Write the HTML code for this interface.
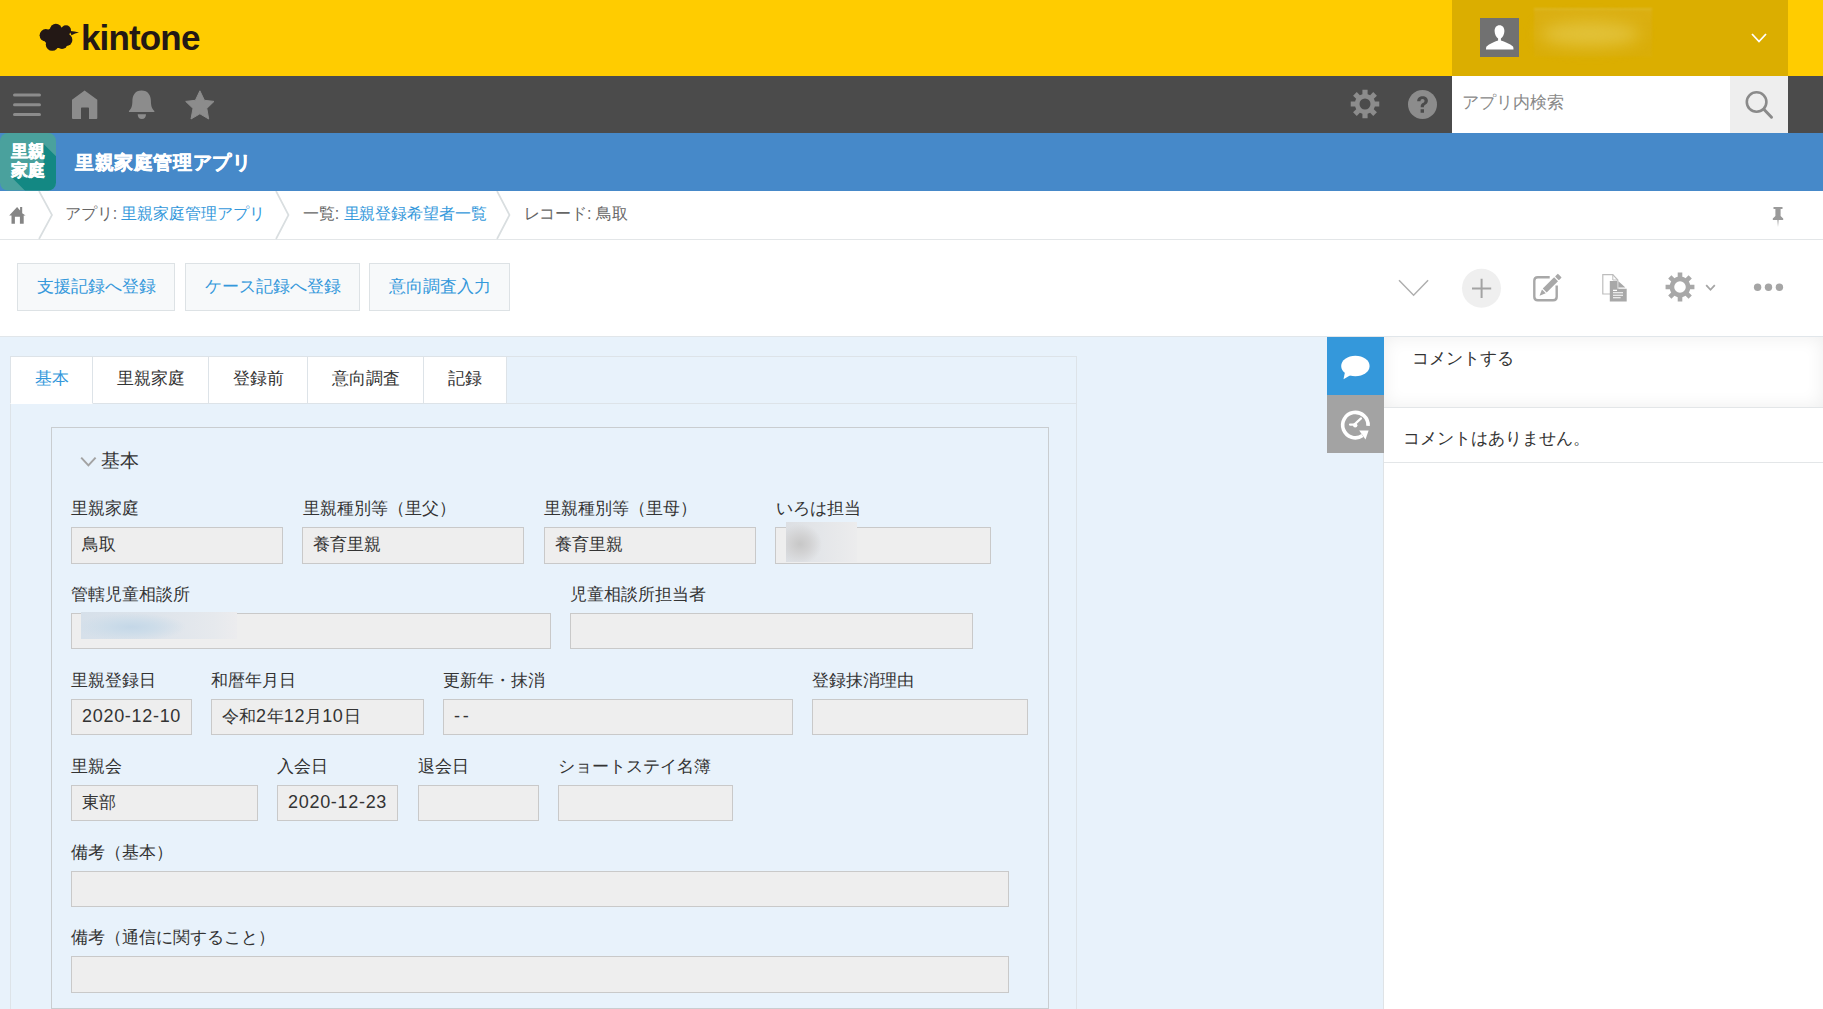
<!DOCTYPE html>
<html><head><meta charset="utf-8">
<style>
*{box-sizing:border-box;margin:0;padding:0}
html,body{width:1823px;height:1009px;overflow:hidden;background:#fff;font-family:"Liberation Sans",sans-serif;color:#333}
.a{position:absolute}
.t{position:absolute;white-space:nowrap;line-height:1}
#hdr{left:0;top:0;width:1823px;height:76px;background:#FFCC00}
#user{left:1452px;top:0;width:336px;height:76px;background:#DBAE00}
#nav{left:0;top:76px;width:1823px;height:57px;background:#4B4B4B}
#search{left:1452px;top:76px;width:278px;height:57px;background:#fff}
#sbtn{left:1730px;top:76px;width:58px;height:57px;background:#EEEEEE}
#appbar{left:0;top:133px;width:1823px;height:58px;background:#4689C9}
#crumb{left:0;top:191px;width:1823px;height:49px;background:#fff;border-bottom:1px solid #E3E6E8}
#content{left:0;top:336px;width:1384px;height:673px;background:#E8F2FB;border-top:1px solid #E1E6EA}
#side{left:1384px;top:336px;width:439px;height:673px;background:#fff;border-top:1px solid #E1E6EA}
.btn{position:absolute;top:263px;height:48px;background:#F7F9FA;border:1px solid #DDE2E5;color:#3498DB;font-size:16.8px;line-height:46px;text-align:center}
.lbl{position:absolute;font-size:16.8px;line-height:1;white-space:nowrap;color:#333}
.fld{position:absolute;height:37px;background:#EEEEEE;border:1px solid #C9C9C9;font-size:16.8px;line-height:33px;padding-left:10px;color:#333;white-space:nowrap}
.n{font-size:18px;letter-spacing:0.7px}
.tab{position:absolute;top:356px;height:48px;border:1px solid #DDE3E8;border-left:none;background:#fff;font-size:16.8px;line-height:44px;text-align:center;color:#333}
</style></head><body>
<div id="hdr" class="a"></div>
<div id="user" class="a"></div>
<div id="nav" class="a"></div>
<div id="search" class="a"></div>
<div id="sbtn" class="a"></div>
<div id="appbar" class="a"></div>
<div id="crumb" class="a"></div>
<div id="content" class="a"></div>
<div id="side" class="a"></div>

<!-- toolbar buttons -->
<div class="btn" style="left:17px;width:158px">支援記録へ登録</div>
<div class="btn" style="left:185px;width:175px">ケース記録へ登録</div>
<div class="btn" style="left:369px;width:141px">意向調査入力</div>

<!-- tabs -->
<div class="a" style="left:10px;top:356px;width:1067px;height:653px;border:1px solid #DDE3E8;border-bottom:none"></div>
<div class="a" style="left:506px;top:403px;width:570px;height:1px;background:#DDE3E8"></div>
<div class="tab" style="left:10px;width:83px;border-left:1px solid #DDE3E8;border-bottom-color:#fff;color:#3498DB">基本</div>
<div class="tab" style="left:93px;width:116px">里親家庭</div>
<div class="tab" style="left:209px;width:99px">登録前</div>
<div class="tab" style="left:308px;width:116px">意向調査</div>
<div class="tab" style="left:424px;width:83px">記録</div>

<!-- section -->
<div class="a" style="left:51px;top:427px;width:998px;height:582px;border:1px solid #C9CDD0"></div>
<div class="lbl" style="left:101px;top:451.3px;font-size:19px">基本</div>
<svg class="a" style="left:78px;top:454px" width="20" height="16" viewBox="0 0 20 16"><path d="M3.2 3.6 L10.4 11.4 L17.6 3.6" fill="none" stroke="#A3A3A3" stroke-width="2"/></svg>

<!-- row1 -->
<div class="lbl" style="left:71px;top:501.3px">里親家庭</div>
<div class="fld" style="left:71px;top:527px;width:212px">鳥取</div>
<div class="lbl" style="left:303px;top:501.3px">里親種別等（里父）</div>
<div class="fld" style="left:302px;top:527px;width:222px">養育里親</div>
<div class="lbl" style="left:544px;top:501.3px">里親種別等（里母）</div>
<div class="fld" style="left:544px;top:527px;width:212px">養育里親</div>
<div class="lbl" style="left:776px;top:501.3px">いろは担当</div>
<div class="fld" style="left:775px;top:527px;width:216px"></div>
<!-- row2 -->
<div class="lbl" style="left:71px;top:587.1px">管轄児童相談所</div>
<div class="fld" style="left:71px;top:613px;width:480px;height:36px"></div>
<div class="lbl" style="left:570px;top:587.1px">児童相談所担当者</div>
<div class="fld" style="left:570px;top:613px;width:403px;height:36px"></div>
<!-- row3 -->
<div class="lbl" style="left:71px;top:672.9px">里親登録日</div>
<div class="fld" style="left:71px;top:699px;width:121px;height:36px"><span class="n">2020-12-10</span></div>
<div class="lbl" style="left:211px;top:672.9px">和暦年月日</div>
<div class="fld" style="left:211px;top:699px;width:213px;height:36px">令和<span class="n">2</span>年<span class="n">12</span>月<span class="n">10</span>日</div>
<div class="lbl" style="left:443px;top:672.9px">更新年・抹消</div>
<div class="fld" style="left:443px;top:699px;width:350px;height:36px"><span class="n" style="letter-spacing:2.8px">--</span></div>
<div class="lbl" style="left:812px;top:672.9px">登録抹消理由</div>
<div class="fld" style="left:812px;top:699px;width:216px;height:36px"></div>
<!-- row4 -->
<div class="lbl" style="left:71px;top:758.7px">里親会</div>
<div class="fld" style="left:71px;top:785px;width:187px;height:36px">東部</div>
<div class="lbl" style="left:277px;top:758.7px">入会日</div>
<div class="fld" style="left:277px;top:785px;width:121px;height:36px"><span class="n">2020-12-23</span></div>
<div class="lbl" style="left:418px;top:758.7px">退会日</div>
<div class="fld" style="left:418px;top:785px;width:121px;height:36px"></div>
<div class="lbl" style="left:558px;top:758.7px">ショートステイ名簿</div>
<div class="fld" style="left:558px;top:785px;width:175px;height:36px"></div>
<!-- row5 -->
<div class="lbl" style="left:71px;top:844.5px">備考（基本）</div>
<div class="fld" style="left:71px;top:871px;width:938px;height:36px"></div>
<div class="lbl" style="left:71px;top:930.3px">備考（通信に関すること）</div>
<div class="fld" style="left:71px;top:956px;width:938px"></div>

<!-- blurred -->
<div class="a" style="left:786px;top:522px;width:71px;height:40px;background:radial-gradient(ellipse 22px 20px at 14px 22px,#C7C7C7 0%,#D2D2D3 45%,rgba(226,228,231,0) 100%),linear-gradient(90deg,#DCDFE3 0%,#E4E6E9 50%,#ECECED 100%)"></div>
<div class="a" style="left:81px;top:612px;width:156px;height:27px;background:radial-gradient(ellipse 55px 14px at 50px 15px,#C4D7E7 0%,#CCDCE9 40%,rgba(220,227,236,0) 100%),linear-gradient(90deg,#D6E0EA 0%,#DEE4EB 50%,#E6E9ED 85%,#ECECEE 100%)"></div>
<!-- header texts -->
<div class="t" style="left:75px;top:152.5px;font-size:19px;font-weight:bold;color:#fff;-webkit-text-stroke:0.5px #fff;letter-spacing:0.6px">里親家庭管理アプリ</div>
<div class="t" style="left:65px;top:206px;font-size:16px;color:#666;letter-spacing:-0.1px">アプリ: <span style="color:#3498DB">里親家庭管理アプリ</span></div>
<div class="t" style="left:303px;top:206px;font-size:16px;color:#666;letter-spacing:-0.1px">一覧: <span style="color:#3498DB">里親登録希望者一覧</span></div>
<div class="t" style="left:523.5px;top:206px;font-size:16px;color:#666;letter-spacing:-0.1px">レコード: 鳥取</div>
<div class="t" style="left:1462px;top:95.1px;font-size:16.8px;color:#888">アプリ内検索</div>

<!-- side -->
<div class="a" style="left:1327px;top:337px;width:57px;height:58px;background:#3498DB"></div>
<div class="a" style="left:1327px;top:395px;width:57px;height:58px;background:#A3A3A3"></div>
<div class="a" style="left:1384px;top:337px;width:439px;height:71px;background:#fff;border-bottom:1px solid #E3E6E8;box-shadow:inset 0 0 18px rgba(0,0,0,0.07)"></div>
<div class="t" style="left:1412px;top:351px;font-size:16.8px;color:#333">コメントする</div>
<div class="t" style="left:1402.5px;top:431px;font-size:16.8px;color:#333">コメントはありません。</div>
<div class="a" style="left:1384px;top:462px;width:439px;height:1px;background:#E3E6E8"></div>
<div class="a" style="left:1383px;top:453px;width:1px;height:556px;background:#DFE3E6"></div>
<!-- kintone logo -->
<svg class="a" style="left:0;top:0" width="90" height="76" viewBox="0 0 90 76">
<g fill="#231815">
<circle cx="45.8" cy="35.3" r="6.2"/><circle cx="55.9" cy="29.8" r="6"/><circle cx="66" cy="30.2" r="5"/>
<circle cx="66.3" cy="39.9" r="6.1"/><circle cx="52.2" cy="44.4" r="6.4"/><circle cx="62" cy="43.3" r="5.7"/>
<ellipse cx="57" cy="37.5" rx="13" ry="10.5"/>
<path d="M69.5 31 Q74 30.8 79 32.5 Q75 33 71.5 35.2 Z"/>
</g></svg>
<div class="t" style="left:81px;top:19.8px;font-size:35px;font-weight:bold;color:#231815;letter-spacing:-0.85px">kintone</div>
<!-- nav icons -->
<svg class="a" style="left:0;top:76px" width="230" height="57" viewBox="0 76 230 57">
<g fill="#8C8C8C">
<rect x="13" y="93.5" width="28" height="3" rx="1.5"/><rect x="13" y="103.3" width="28" height="3" rx="1.5"/><rect x="13" y="113" width="28" height="3" rx="1.5"/>
<path d="M72 99.8 L84.6 90.6 L97.3 99.8 L97.3 118 Q97.3 119 96.3 119 L89 119 L89 108.3 Q89 107.5 88.2 107.5 L81.8 107.5 Q81 107.5 81 108.3 L81 119 L73 119 Q72 119 72 118 Z"/>
<path d="M141.5 90.6 C135 90.6 132.5 95.5 132.4 101 C132.3 106 131.5 108.5 129 111 L128.9 112 L154.4 112 L154.3 111 C151.8 108.5 151 106 150.9 101 C150.8 95.5 148.2 90.6 141.5 90.6 Z"/>
<path d="M137.7 114.3 L146 114.3 Q146 119 141.85 119 Q137.7 119 137.7 114.3 Z"/>
<path d="M199.9 90.8 L204.4 100.3 L214 101.4 L206.8 108.4 L208.7 119 L199.9 113.8 L191 119 L193 108.4 L185.7 101.4 L195.4 100.3 Z" stroke="#8C8C8C" stroke-width="1" stroke-linejoin="round"/>
</g></svg>
<svg class="a" style="left:1350px;top:89.4px" width="30" height="30" viewBox="0 0 30 30"><path fill="#8C8C8C" fill-rule="evenodd" d="M24.86 12.40 L29.26 12.40 L29.26 17.60 L24.86 17.60 A10.20 10.20 0 0 1 23.81 20.14 L26.93 23.25 L23.25 26.93 L20.14 23.81 A10.20 10.20 0 0 1 17.60 24.86 L17.60 29.26 L12.40 29.26 L12.40 24.86 A10.20 10.20 0 0 1 9.86 23.81 L6.75 26.93 L3.07 23.25 L6.19 20.14 A10.20 10.20 0 0 1 5.14 17.60 L0.74 17.60 L0.74 12.40 L5.14 12.40 A10.20 10.20 0 0 1 6.19 9.86 L3.07 6.75 L6.75 3.07 L9.86 6.19 A10.20 10.20 0 0 1 12.40 5.14 L12.40 0.74 L17.60 0.74 L17.60 5.14 A10.20 10.20 0 0 1 20.14 6.19 L23.25 3.07 L26.93 6.75 L23.81 9.86 A10.20 10.20 0 0 1 24.86 12.40 Z M20.50 15.00 A5.50 5.50 0 1 0 9.50 15.00 A5.50 5.50 0 1 0 20.50 15.00 Z"/></svg>
<svg class="a" style="left:1407.9px;top:89.9px" width="29" height="29" viewBox="0 0 29 29"><circle cx="14.5" cy="14.5" r="14.5" fill="#8C8C8C"/>
<path d="M9.2 11.3 C9.2 7.8 11.5 6.2 14.6 6.2 C17.8 6.2 19.9 8 19.9 10.8 C19.9 13.2 18.3 14.1 16.9 15 C16.1 15.5 15.9 16 15.9 16.8 L15.9 17.3 L12.7 17.3 L12.7 16.4 C12.7 14.9 13.3 14 14.7 13.1 C15.9 12.3 16.5 11.8 16.5 10.9 C16.5 9.8 15.7 9.1 14.5 9.1 C13.2 9.1 12.5 9.9 12.5 11.3 Z M12.6 19.3 L16 19.3 L16 22.8 L12.6 22.8 Z" fill="#4B4B4B"/></svg>
<!-- user -->
<div class="a" style="left:1480px;top:18px;width:39px;height:39px;background:#717171"></div>
<svg class="a" style="left:1480px;top:18px" width="39" height="39" viewBox="0 0 39 39"><path fill="#fff" d="M19.5 7.2 C22.6 7.2 24.4 9.6 24.4 13 C24.4 16.2 22.8 19.2 20.9 20.4 L20.9 22.4 C24.5 23.6 30 25.5 33 28.6 C33.5 29.2 33.5 31.5 33.5 31.5 L6 31.5 C6 31.5 6 29.2 6.5 28.6 C9.5 25.5 14.5 23.6 18.1 22.4 L18.1 20.4 C16.2 19.2 14.6 16.2 14.6 13 C14.6 9.6 16.4 7.2 19.5 7.2 Z"/></svg>
<div class="a" style="left:1534px;top:8px;width:118px;height:49px;background:linear-gradient(#E0BC2E 0,#DBB014 3px,#DAAF08 100%);opacity:.9;filter:blur(1px)"></div>
<div class="a" style="left:1540px;top:22px;width:100px;height:24px;border-radius:50%;background:#E2C23A;filter:blur(8px)"></div>
<svg class="a" style="left:1750px;top:32px" width="18" height="12" viewBox="0 0 18 12"><path d="M2 2 L9 9.5 L16 2" fill="none" stroke="#fff" stroke-width="1.8"/></svg>
<!-- search icon -->
<svg class="a" style="left:1740px;top:86px" width="40" height="40" viewBox="0 0 40 40"><circle cx="16.6" cy="16" r="9.8" fill="none" stroke="#8A8A8A" stroke-width="2.6"/><path d="M23.8 23.3 L31.5 31.2" stroke="#8A8A8A" stroke-width="3" stroke-linecap="round"/></svg>
<!-- app icon -->
<svg class="a" style="left:0;top:133px" width="57" height="58" viewBox="0 0 57 58">
<defs><clipPath id="ic"><rect x="0" y="0" width="56" height="57.5" rx="8"/></clipPath></defs>
<g clip-path="url(#ic)"><rect width="57" height="58" fill="#4AA19D"/><path d="M43.6 11 L95 62 L62 95 L11.7 44.3 L43.6 44.3 Z" fill="#138883"/></g>
</svg>
<div class="t" style="left:10.5px;top:143px;font-size:16.6px;font-weight:bold;color:#fff;line-height:18.5px;letter-spacing:0;-webkit-text-stroke:0.5px #fff">里親<br>家庭</div>
<!-- crumb -->
<svg class="a" style="left:0;top:191px" width="520" height="49" viewBox="0 0 520 49">
<path d="M17.1 16 L20.1 19.6 L20.1 16.1 L22.2 16.1 L22.2 22.3 L25.6 24.5 L23.7 24.5 L23.7 32.8 L19.9 32.8 L19.9 25.7 L14.9 25.7 L14.9 32.8 L11.5 32.8 L11.5 24.5 L9.2 24.5 Z" fill="#858585"/>
<path d="M39 0 L52 24 L39 48" fill="none" stroke="#D9DEE0" stroke-width="1.7"/>
<path d="M276 0 L288.5 24 L276 48" fill="none" stroke="#D9DEE0" stroke-width="1.7"/>
<path d="M497 0 L509.5 24 L497 48" fill="none" stroke="#D9DEE0" stroke-width="1.7"/>
</svg>
<svg class="a" style="left:1766px;top:202.5px" width="24" height="28" viewBox="0 0 24 28"><path d="M7.5 4 L16.5 4 L16.5 6 L14.6 6 L14.6 13 L17.2 15.5 L17.2 17 L12.6 17 L12 24 L11.4 17 L6.8 17 L6.8 15.5 L9.4 13 L9.4 6 L7.5 6 Z" fill="#9A9A9A"/></svg>
<!-- toolbar icons -->
<svg class="a" style="left:1390px;top:262px" width="420" height="50" viewBox="1390 262 420 50">
<path d="M1399 280.2 L1413.6 295.2 L1428.1 280.2" fill="none" stroke="#AFAFAF" stroke-width="1.5"/>
<circle cx="1481.5" cy="288.2" r="19.5" fill="#EFEFEF"/>
<path d="M1472 288.4 H1491.2 M1481.6 278.7 V298" stroke="#A3A3A3" stroke-width="2"/>
<path d="M1549.7 277.3 H1537.8 Q1534.3 277.3 1534.3 280.8 V296.8 Q1534.3 300.3 1537.8 300.3 H1553.2 Q1556.7 300.3 1556.7 296.8 V285.5" fill="none" stroke="#A8A8A8" stroke-width="2.4"/>
<g transform="translate(1539.5 295.8) rotate(-45)" fill="#A8A8A8"><path d="M0 0 L6.2 -2.7 L6.2 2.7 Z"/><rect x="7.4" y="-2.75" width="16" height="5.5"/><rect x="24.6" y="-2.75" width="4.1" height="5.5" rx="0.8"/></g>
<path d="M1602.8 274.6 H1612.8 L1617.8 280 V294 H1602.8 Z" fill="#fff" stroke="#BDBDBD" stroke-width="1.2"/>
<path d="M1612.8 274.6 V280 H1617.8" fill="none" stroke="#BDBDBD" stroke-width="1"/>
<path d="M1609.8 281 H1617 V288.8 H1626.7 V301.6 H1609.8 Z" fill="#A8A8A8"/>
<path d="M1618.4 281.3 V287.6 H1625.4 Z" fill="#A8A8A8"/>
<path d="M1613 290.4 H1617 M1613 292.8 H1623 M1613 295.3 H1623 M1613 297.7 H1620.6" stroke="#fff" stroke-width="1.1"/>
<path d="M1706.2 285.2 L1710.5 289.8 L1714.8 285.2" fill="none" stroke="#A5A5A5" stroke-width="1.8"/>
<circle cx="1757.6" cy="287.3" r="3.7" fill="#A5A5A5"/><circle cx="1768.5" cy="287.3" r="3.7" fill="#A5A5A5"/><circle cx="1779.4" cy="287.3" r="3.7" fill="#A5A5A5"/>
</svg>
<svg class="a" style="left:1665.3px;top:272.4px" width="30" height="30" viewBox="0 0 30 30"><path fill="#A8A8A8" fill-rule="evenodd" d="M25.14 12.70 L29.42 12.70 L29.42 17.30 L25.14 17.30 A10.40 10.40 0 0 1 23.80 20.55 L26.82 23.57 L23.57 26.82 L20.55 23.80 A10.40 10.40 0 0 1 17.30 25.14 L17.30 29.42 L12.70 29.42 L12.70 25.14 A10.40 10.40 0 0 1 9.45 23.80 L6.43 26.82 L3.18 23.57 L6.20 20.55 A10.40 10.40 0 0 1 4.86 17.30 L0.58 17.30 L0.58 12.70 L4.86 12.70 A10.40 10.40 0 0 1 6.20 9.45 L3.18 6.43 L6.43 3.18 L9.45 6.20 A10.40 10.40 0 0 1 12.70 4.86 L12.70 0.58 L17.30 0.58 L17.30 4.86 A10.40 10.40 0 0 1 20.55 6.20 L23.57 3.18 L26.82 6.43 L23.80 9.45 A10.40 10.40 0 0 1 25.14 12.70 Z M20.80 15.00 A5.80 5.80 0 1 0 9.20 15.00 A5.80 5.80 0 1 0 20.80 15.00 Z"/></svg>
<!-- side tab icons -->
<svg class="a" style="left:1327px;top:337px" width="57" height="116" viewBox="1327 337 57 116">
<ellipse cx="1355.4" cy="366" rx="14.2" ry="10.3" fill="#fff"/>
<path d="M1345 372 L1343.5 379.2 L1351.5 374.5 Z" fill="#fff"/>
<path d="M1368.05 425.8 A12.7 12.7 0 1 0 1362.5 435.6" fill="none" stroke="#fff" stroke-width="3.6"/>
<path d="M1359.2 430.6 L1368.6 430.6 L1365.5 439.6 Z" fill="#fff"/>
<path d="M1350 424.6 L1354.3 424.6 L1361 418.4" fill="none" stroke="#fff" stroke-width="2.2" stroke-linecap="round"/>
<circle cx="1355.2" cy="425.2" r="2.2" fill="#fff"/>
</svg>
</body></html>
